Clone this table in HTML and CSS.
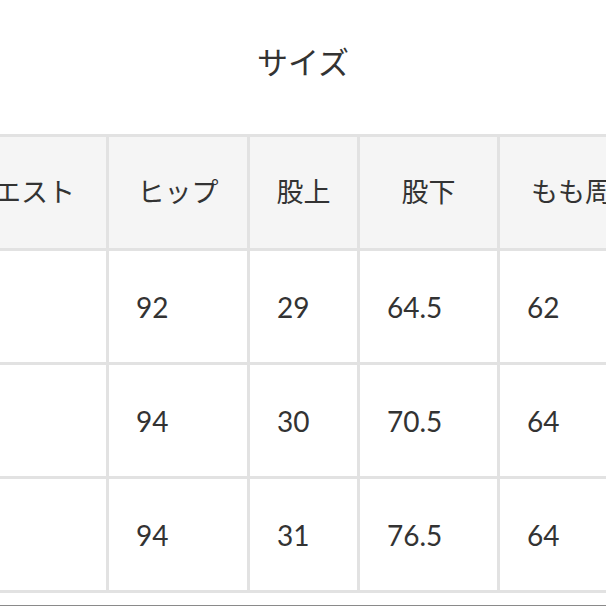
FILE: index.html
```html
<!DOCTYPE html>
<html lang="ja">
<head>
<meta charset="utf-8">
<link rel="stylesheet" href="styles.css">
</head>
<body>
<div class="page">
  <h2 class="title">サイズ</h2>
  <table class="size-table">
    <colgroup>
      <col class="c0"><col class="c1"><col class="c2"><col class="c3"><col class="c4">
    </colgroup>
    <thead>
      <tr><th>ウエスト</th><th>ヒップ</th><th>股上</th><th>股下</th><th>もも周り</th></tr>
    </thead>
    <tbody>
      <tr><td></td><td>92</td><td>29</td><td>64.5</td><td>62</td></tr>
      <tr><td></td><td>94</td><td>30</td><td>70.5</td><td>64</td></tr>
      <tr><td></td><td>94</td><td>31</td><td>76.5</td><td>64</td></tr>
    </tbody>
  </table>
  <div class="rule"></div>
</div>
</body>
</html>
```
FILE: styles.css
```css
html, body {
  margin: 0;
  padding: 0;
  background: #ffffff;
  overflow: hidden;
}
.page {
  width: 606px;
  height: 606px;
  overflow: hidden;
  font-family: Lato, "Noto Sans CJK JP", sans-serif;
  color: #333333;
}
.title {
  margin: 0;
  padding-top: 44px;
  height: 36px;
  line-height: 36px;
  font-size: 31px;
  font-weight: 400;
  text-align: center;
  margin-bottom: 54px;
}
.size-table {
  border-collapse: collapse;
  table-layout: fixed;
  width: 737px;
  margin-left: -67px;
  border: 3px solid #e2e2e2;
}
.c0 { width: 173px; }
.c1 { width: 141px; }
.c2 { width: 110px; }
.c3 { width: 140px; }
.c4 { width: 173px; }
.size-table th,
.size-table td {
  border: 3px solid #e2e2e2;
  height: 111px;
  padding: 0;
  vertical-align: middle;
  font-weight: 400;
  white-space: nowrap;
  overflow: hidden;
}
.size-table th {
  background: #f5f5f5;
  font-size: 27px;
  text-align: center;
  padding-bottom: 5px;
  height: 106px;
}
.size-table td {
  background: #ffffff;
  font-size: 28px;
  text-align: left;
  padding-left: 27px;
}
.rule {
  margin-top: 12px;
  border-top: 2px solid #8a8a8a;
}
```
